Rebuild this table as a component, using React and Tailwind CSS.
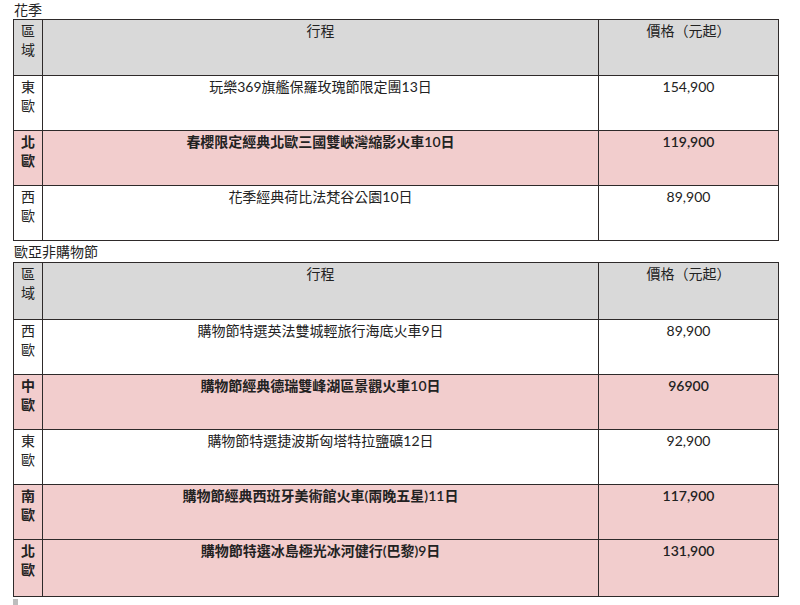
const springTours = [
  { region: "東歐", name: "玩樂369旗艦保羅玫瑰節限定團13日", price: "154,900" },
  { region: "北歐", name: "春櫻限定經典北歐三國雙峽灣縮影火車10日", price: "119,900", hot: true },
  { region: "西歐", name: "花季經典荷比法梵谷公園10日", price: "89,900" },
];

const shoppingTours = [
  { region: "西歐", name: "購物節特選英法雙城輕旅行海底火車9日", price: "89,900" },
  { region: "中歐", name: "購物節經典德瑞雙峰湖區景觀火車10日", price: "96900", hot: true },
  { region: "東歐", name: "購物節特選捷波斯匈塔特拉鹽礦12日", price: "92,900" },
  { region: "南歐", name: "購物節經典西班牙美術館火車(兩晚五星)11日", price: "117,900", hot: true },
  { region: "北歐", name: "購物節特選冰島極光冰河健行(巴黎)9日", price: "131,900", hot: true, tall: true },
];

const cols = "grid grid-cols-[29px_556px_180px]";
const cell = "border-r border-b border-[#2e2a2a] pt-px text-center leading-[19px]";

function TourTable({ rows, headH = "h-[56px]" }) {
  return (
    <div className="w-[766px] border-l border-t border-[#2e2a2a]">
      <div className={`${cols} ${headH} bg-[#d9d9d9]`}>
        <div className={`${cell} px-[7px]`}>區域</div>
        <div className={cell}>行程</div>
        <div className={cell}>價格（元起）</div>
      </div>
      {rows.map((r) => (
        <div
          key={r.name}
          className={`${cols} ${r.tall ? "h-[57px]" : "h-[55px]"} ${
            r.hot ? "bg-[#f2cdcd] font-semibold" : "bg-white"
          }`}
        >
          <div className={`${cell} px-[7px]`}>{r.region}</div>
          <div className={cell}>{r.name}</div>
          <div className={cell}>{r.price}</div>
        </div>
      ))}
    </div>
  );
}

export default function App() {
  return (
    <div className="min-h-[605px] bg-white pl-[13px] text-[14px] text-[#222] [font-family:Lato,'Noto_Sans_CJK_TC',sans-serif]">
      <h2 className="leading-[19px] pl-px">花季</h2>
      <TourTable rows={springTours} />
      <h2 className="leading-[21px] pl-px">歐亞非購物節</h2>
      <TourTable rows={shoppingTours} headH="h-[57px]" />
      <div className="mt-[2px] h-[6px] w-[5px] bg-[#bdbdbd]" />
    </div>
  );
}
